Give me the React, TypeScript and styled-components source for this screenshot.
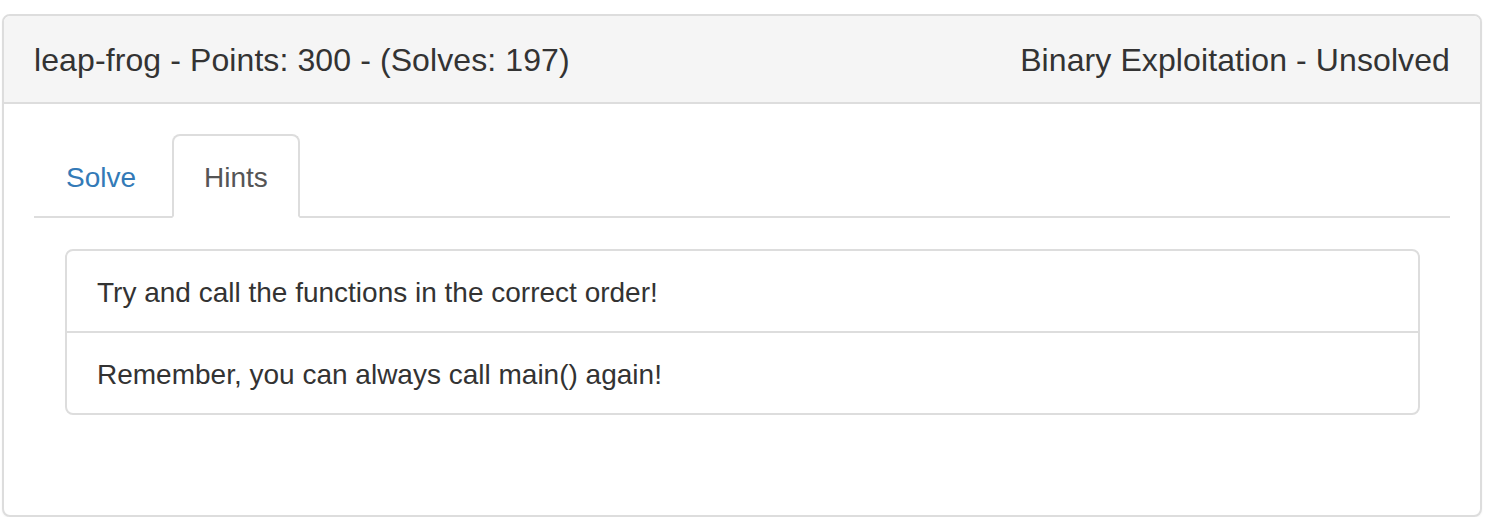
import React from "react";
import styled, { createGlobalStyle } from "styled-components";

const Global = createGlobalStyle`
  html, body { margin: 0; padding: 0; background: #fff; }
  body { font-family: "Liberation Sans", Arial, Helvetica, sans-serif; color: #333; }
`;

const Page = styled.div`
  padding: 14px 12px 0 2px;
`;

const Panel = styled.div`
  border: 2px solid #ddd;
  border-radius: 8px;
  background: #fff;
  box-shadow: 0 1px 2px rgba(0,0,0,0.05);
`;

const Heading = styled.div`
  display: flex;
  justify-content: space-between;
  align-items: center;
  background: #f5f5f5;
  border-bottom: 2px solid #ddd;
  border-radius: 6px 6px 0 0;
  padding: 21px 30px 19px 30px;
  height: 46px;
`;

const Title = styled.h3`
  margin: 0;
  font-size: 32px;
  font-weight: 400;
  line-height: 46px;
  color: #333;
  letter-spacing: 0.1px;
`;

const Body = styled.div`
  padding: 30px;
`;

const TabBar = styled.ul`
  display: flex;
  list-style: none;
  margin: 0;
  padding: 0;
  border-bottom: 2px solid #ddd;
`;

const Tab = styled.li<{ $active?: boolean }>`
  margin-right: 4px;
  margin-bottom: -2px;
  padding: 22px 30px 18px;
  font-size: 28px;
  line-height: 40px;
  border: 2px solid ${(p) => (p.$active ? "#ddd" : "transparent")};
  border-bottom-color: ${(p) => (p.$active ? "#fff" : "transparent")};
  border-radius: 8px 8px 0 0;
  background: ${(p) => (p.$active ? "#fff" : "transparent")};
  color: ${(p) => (p.$active ? "#555" : "#337ab7")};
`;

const TabContent = styled.div`
  padding: 31px 30px 30px 31px;
`;

const ListGroup = styled.ul`
  list-style: none;
  margin: 0 0 40px;
  padding: 0;
`;

const ListItem = styled.li`
  padding: 22px 30px 18px;
  font-size: 28px;
  line-height: 40px;
  color: #333;
  border: 2px solid #ddd;
  margin-bottom: -2px;
  &:first-child { border-radius: 8px 8px 0 0; }
  &:last-child { border-radius: 0 0 8px 8px; margin-bottom: 0; }
`;

export default function App() {
  return (
    <Page>
      <Global />
      <Panel>
        <Heading>
          <Title>leap-frog - Points: 300 - (Solves: 197)</Title>
          <Title>Binary Exploitation - Unsolved</Title>
        </Heading>
        <Body>
          <TabBar>
            <Tab>Solve</Tab>
            <Tab $active>Hints</Tab>
          </TabBar>
          <TabContent>
            <ListGroup>
              <ListItem>Try and call the functions in the correct order!</ListItem>
              <ListItem>Remember, you can always call main() again!</ListItem>
            </ListGroup>
          </TabContent>
        </Body>
      </Panel>
    </Page>
  );
}
